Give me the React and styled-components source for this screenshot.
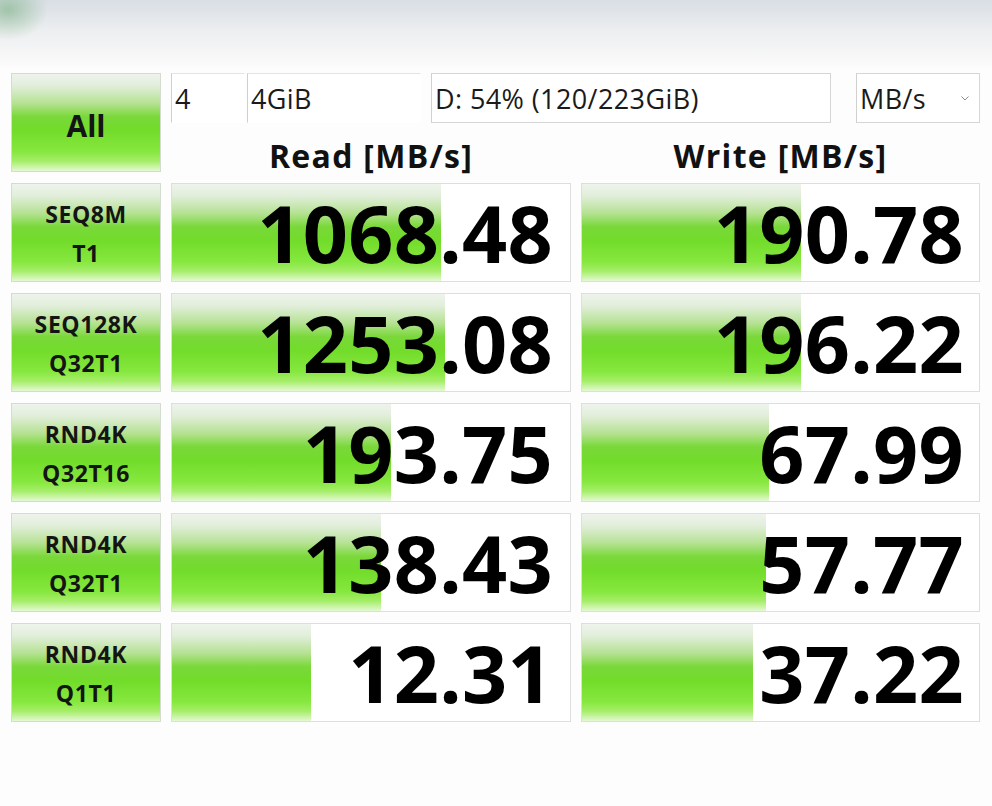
import styled, { createGlobalStyle } from "styled-components";

const GlobalStyle = createGlobalStyle`
  html, body {
    margin: 0;
    padding: 0;
    background: #fdfdfd;
  }
  body {
    font-family: "Open Sans", "Noto Sans", sans-serif;
    color: #111;
  }
`;

const greenGradient = `linear-gradient(
  to bottom,
  #eef3ec 0%,
  #e2eedb 12%,
  #b6e294 30%,
  #7ad83a 44%,
  #72dc2a 58%,
  #86e83e 80%,
  #a6ee6a 90%,
  #e4f8d4 100%
)`;

const Window = styled.div`
  width: 992px;
  height: 806px;
  overflow: hidden;
  background:
    radial-gradient(ellipse 40px 30px at 8px 10px, rgba(110, 170, 120, 0.55), transparent),
    linear-gradient(to bottom, #d9dee4 0px, #eceef0 30px, #f8f8f8 60px, #fdfdfd 70px);
`;

const MenuBlur = styled.div`
  height: 73px;
`;

const Board = styled.div`
  display: grid;
  grid-template-columns: 150px 400px 399px;
  column-gap: 10px;
  row-gap: 11px;
  padding-left: 11px;
`;

const GreenButton = styled.div`
  height: 99px;
  box-sizing: border-box;
  border: 1px solid #d4dccf;
  background: ${greenGradient};
  display: flex;
  flex-direction: column;
  align-items: center;
  justify-content: center;
  font-weight: 700;
  font-size: ${(p) => p.$size}px;
  letter-spacing: ${(p) => p.$spacing || 0}px;
  line-height: ${(p) => (p.$big ? 1 : "39px")};
  padding-top: ${(p) => (p.$big ? 6 : 2)}px;
  color: #141414;
`;

const TopBlock = styled.div`
  grid-column: span 2;
  display: grid;
  grid-template-columns: 400px 399px;
  column-gap: 10px;
  grid-template-rows: 50px 49px;
`;

const Controls = styled.div`
  grid-column: span 2;
  display: flex;
  align-items: stretch;
`;

const Field = styled.div`
  width: ${(p) => p.$w}px;
  margin-left: ${(p) => p.$gap || 0}px;
  box-sizing: border-box;
  border: 1px solid ${(p) => (p.$faint ? "transparent" : "#d6d6d6")};
  border-left-color: #d0d0d0;
  border-top-color: ${(p) => (p.$faint ? "#e4e4e4" : "#d6d6d6")};
  background: #fff;
  font-size: 27px;
  letter-spacing: 0.4px;
  color: #1a1a1a;
  display: flex;
  align-items: center;
  justify-content: space-between;
  padding: 0 8px 0 3px;
`;

const Chevron = styled.svg`
  width: 12px;
  height: 12px;
  flex: none;
`;

const Header = styled.div`
  font-weight: 700;
  font-size: 32px;
  letter-spacing: 1.3px;
  text-align: center;
  padding-top: 17px;
  line-height: 1;
  color: #111;
`;

const Cell = styled.div`
  position: relative;
  height: 99px;
  box-sizing: border-box;
  border: 1px solid #dedede;
  background: #fff;
  display: flex;
  align-items: center;
  justify-content: flex-end;
  padding-right: ${(p) => p.$pad}px;
`;

const Bar = styled.div`
  position: absolute;
  left: 0;
  top: 0;
  bottom: 0;
  background: ${greenGradient};
`;

const Value = styled.span`
  position: relative;
  font-weight: 700;
  font-size: 79px;
  line-height: 1;
  color: #000;
  letter-spacing: 0.3px;
`;

const rows = [
  { name: ["SEQ8M", "T1"], read: "1068.48", rw: 269, write: "190.78", ww: 219 },
  { name: ["SEQ128K", "Q32T1"], read: "1253.08", rw: 273, write: "196.22", ww: 219 },
  { name: ["RND4K", "Q32T16"], read: "193.75", rw: 219, write: "67.99", ww: 187 },
  { name: ["RND4K", "Q32T1"], read: "138.43", rw: 209, write: "57.77", ww: 184 },
  { name: ["RND4K", "Q1T1"], read: "12.31", rw: 139, write: "37.22", ww: 171 },
];

const Down = () => (
  <Chevron viewBox="0 0 12 12">
    <path d="M2.5 4.5 L6 8 L9.5 4.5" fill="none" stroke="#8a8a8a" strokeWidth="1" />
  </Chevron>
);

export default function App() {
  return (
    <Window>
      <GlobalStyle />
      <MenuBlur />
      <Board>
        <GreenButton $big $size={30}>All</GreenButton>
        <TopBlock>
          <Controls>
            <Field $w={74} $faint>4</Field>
            <Field $w={174} $gap={2} $faint>4GiB</Field>
            <Field $w={400} $gap={10}>D: 54% (120/223GiB)</Field>
            <Field $w={124} $gap={25}>
              MB/s
              <Down />
            </Field>
          </Controls>
          <Header>Read [MB/s]</Header>
          <Header>Write [MB/s]</Header>
        </TopBlock>

        {rows.map((r) => (
          <>
            <GreenButton key={r.name.join()} $size={23} $spacing={0.6}>
              <span>{r.name[0]}</span>
              <span>{r.name[1]}</span>
            </GreenButton>
            <Cell $pad={17}>
              <Bar style={{ width: r.rw }} />
              <Value>{r.read}</Value>
            </Cell>
            <Cell $pad={15}>
              <Bar style={{ width: r.ww }} />
              <Value>{r.write}</Value>
            </Cell>
          </>
        ))}
      </Board>
    </Window>
  );
}
